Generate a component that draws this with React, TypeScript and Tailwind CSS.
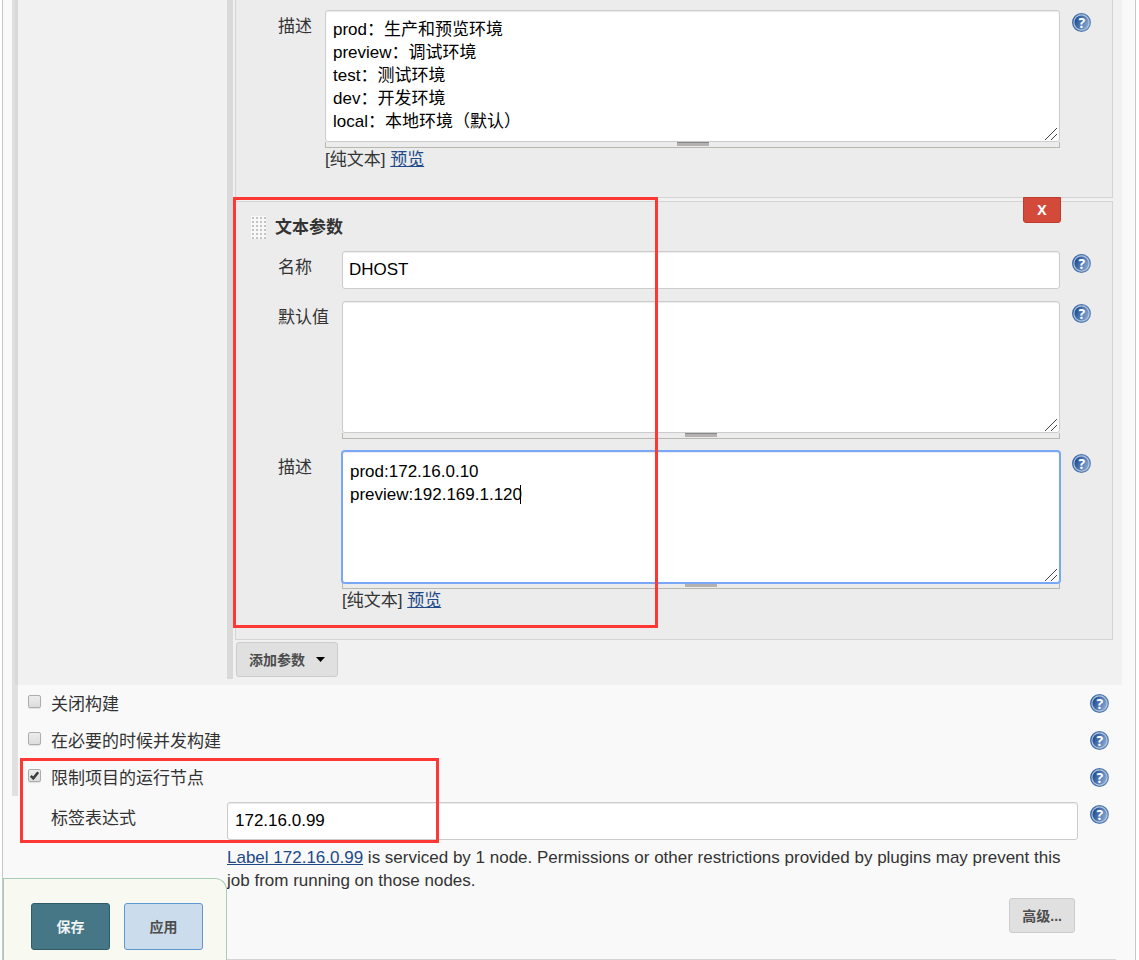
import { useState, type ReactNode } from "react";

function HelpButton({ topic }: { topic: string }) {
  return (
    <button type="button" aria-label={topic} className="block size-[19px] shrink-0">
      <svg viewBox="0 0 19 19" className="size-full" aria-hidden="true">
        <defs>
          <linearGradient id="helpRim" x1="0" y1="0.3" x2="1" y2="0.6">
            <stop offset="0" stopColor="#3465a4" />
            <stop offset="1" stopColor="#5f86b8" />
          </linearGradient>
          <linearGradient id="helpDisk" x1="0" y1="0.3" x2="1" y2="0.7">
            <stop offset="0" stopColor="#1d4a8f" />
            <stop offset="1" stopColor="#86a8d2" />
          </linearGradient>
        </defs>
        <circle cx="9.5" cy="9.5" r="8.8" fill="#b4c5de" stroke="url(#helpRim)" strokeWidth="1.3" />
        <circle cx="9.5" cy="9.5" r="7" fill="url(#helpDisk)" />
        <text
          x="9.8"
          y="14.6"
          textAnchor="middle"
          fontSize="14"
          fontWeight="700"
          fontFamily="'Open Sans', sans-serif"
          fill="#ffffff"
        >
          ?
        </text>
      </svg>
    </button>
  );
}

const fieldClass =
  "block w-full rounded-[3px] border bg-white text-black shadow-[inset_0_1px_1px_rgba(0,0,0,0.08)] outline-none";

type AreaProps = { id: string; value: string; active?: boolean; children?: ReactNode };

function ResizableArea({ id, value, active, children }: AreaProps) {
  const [text, setText] = useState(value);
  return (
    <div className="relative">
      <textarea
        id={id}
        spellCheck={false}
        value={text}
        onChange={(e) => setText(e.target.value)}
        className={`${fieldClass} h-[132px] resize-y px-[7px] pb-[7px] leading-[23px] [&::-webkit-resizer]:bg-transparent ${
          active ? "relative z-10 border-[#7aa7f5] pt-2 ring-1 ring-[#7aa7f5]" : "border-[#ccc] pt-[7px]"
        }`}
      />
      <div className="flex h-[6px] justify-center border-x border-b border-[#b8b8b0]">
        <span className="h-[4px] w-8 border-t border-[#888] bg-[#b5b1b1]" />
      </div>
      <svg
        viewBox="0 0 12 12"
        className="pointer-events-none absolute right-[3px] bottom-2 z-20 size-3"
        aria-hidden="true"
      >
        <path d="M0 12 12 0M6 12 12 6" fill="none" stroke="#444" strokeWidth="1" />
      </svg>
      {children}
    </div>
  );
}

function PreviewLine() {
  return (
    <div className="leading-[23px]">
      [纯文本]{" "}
      <a href="#preview" className="text-[#204a87] underline">
        预览
      </a>
    </div>
  );
}

type RowProps = {
  label: string;
  htmlFor: string;
  narrow?: boolean;
  children: ReactNode;
};

function FieldRow({ label, htmlFor, narrow, children }: RowProps) {
  return (
    <div className="flex items-start">
      <label htmlFor={htmlFor} className={`shrink-0 pt-[5px] leading-[23px] ${narrow ? "w-[47px]" : "w-16"}`}>
        {label}
      </label>
      <div className="min-w-0 flex-1">{children}</div>
      <div className="ml-3 pt-[3px]">
        <HelpButton topic={`帮助：${label}`} />
      </div>
    </div>
  );
}

function CheckRow({ id, label, checked = false }: { id: string; label: string; checked?: boolean }) {
  const [on, setOn] = useState(checked);
  return (
    <div className="flex h-[37px] items-center pr-[13px] pl-[10px]">
      <span className="mr-[10px] mb-1 grid size-[13px] shrink-0">
        <input
          id={id}
          type="checkbox"
          checked={on}
          onChange={(e) => setOn(e.target.checked)}
          className="peer col-start-1 row-start-1 size-[13px] appearance-none rounded-[2px] border border-[#adadad] bg-linear-to-b from-[#ededed] to-[#dcdcdc] shadow-[0_1px_1px_rgba(0,0,0,0.1)]"
        />
        <svg
          viewBox="0 0 13 13"
          className="pointer-events-none invisible col-start-1 row-start-1 size-[13px] peer-checked:visible"
          aria-hidden="true"
        >
          <path d="M2.8 6.8 5.3 9.3 10.2 3.2" fill="none" stroke="#3c3c3c" strokeWidth="2.5" />
        </svg>
      </span>
      <label htmlFor={id} className="flex-1 pt-[2px] leading-[23px]">
        {label}
      </label>
      <HelpButton topic={`帮助：${label}`} />
    </div>
  );
}

function DragHandle() {
  return (
    <svg width="15" height="23" viewBox="0 0 15 23" aria-hidden="true">
      <defs>
        <pattern id="grip" width="4" height="4" patternUnits="userSpaceOnUse">
          <rect width="4" height="4" fill="#f8f8f8" />
          <rect x="1" y="1" width="2" height="2" fill="#c4c4c4" />
        </pattern>
      </defs>
      <rect width="15" height="23" fill="url(#grip)" />
    </svg>
  );
}

const plainButton =
  "flex h-[35px] items-center rounded-[3px] border border-[#ccc] bg-[#e0e0e0] px-3 text-sm font-bold text-[#4d4d4d]";

export default function App() {
  const [host, setHost] = useState("DHOST");
  const [node, setNode] = useState("172.16.0.99");

  return (
    <div className="min-h-screen bg-white pr-[3px] pl-[2px] font-['Liberation_Sans','Noto_Sans_CJK_SC',sans-serif] text-[17px] font-normal text-[#333]">
      <main className="min-h-screen border-x border-[#c8c8c8] bg-[#f9f9f9] pr-[13px] pl-[9px]">
        <div className="border-l-[6px] border-[#e0e0e0]">
          <section className="-ml-[3px] bg-black/[0.03] pb-[6px] pl-[212px]">
            <div className="border-l-[6px] border-[#d9d9d9] pr-[9px] pb-[2px] pl-[2px]">
              <div className="border-x border-b border-[#d4d4d4] bg-[#ececec] pt-[10px] pr-[21px] pb-[26px] pl-[42px]">
                <FieldRow label="描述" htmlFor="env-description" narrow>
                  <ResizableArea
                    id="env-description"
                    value={"prod：生产和预览环境\npreview：调试环境\ntest：测试环境\ndev：开发环境\nlocal：本地环境（默认）"}
                  />
                  <PreviewLine />
                </FieldRow>
              </div>

              <div className="relative mt-[3px] border border-[#d4d4d4] bg-[#ececec] pt-[14px] pr-[21px] pb-[27px] pl-[42px]">
                <button
                  type="button"
                  aria-label="删除"
                  className="absolute -top-[5px] right-[51px] flex h-[26px] w-[38px] items-center justify-center rounded-b-[3px] border border-[#c23a2b] bg-[#d34a3a] font-['Open_Sans',sans-serif] text-sm font-bold text-white"
                >
                  X
                </button>
                <div className="-ml-[27px] flex items-center gap-[9px]">
                  <DragHandle />
                  <h2 className="leading-[23px] font-bold">文本参数</h2>
                </div>
                <div className="mt-3 flex flex-col gap-3">
                  <FieldRow label="名称" htmlFor="param-name">
                    <input
                      id="param-name"
                      value={host}
                      onChange={(e) => setHost(e.target.value)}
                      className={`${fieldClass} h-[38px] border-[#ccc] px-[6px]`}
                    />
                  </FieldRow>
                  <FieldRow label="默认值" htmlFor="param-default">
                    <ResizableArea id="param-default" value="" />
                  </FieldRow>
                  <FieldRow label="描述" htmlFor="param-description">
                    <ResizableArea
                      id="param-description"
                      value={"prod:172.16.0.10\npreview:192.169.1.120"}
                      active
                    >
                      <span className="absolute top-[34px] left-[178px] z-20 h-[19px] w-px bg-black" />
                    </ResizableArea>
                    <PreviewLine />
                  </FieldRow>
                </div>
                <div className="pointer-events-none absolute -top-[5px] -left-[3px] z-30 h-[431px] w-[425px] border-[3px] border-[#ff3836]" />
              </div>

              <button type="button" className={`${plainButton} mt-[2px] ml-px gap-[11px]`}>
                添加参数
                <svg width="9" height="5" viewBox="0 0 9 5" aria-hidden="true">
                  <path d="M0 0h9L4.500 5z" fill="#000" />
                </svg>
              </button>
            </div>
          </section>

          <CheckRow id="disable-build" label="关闭构建" />
          <CheckRow id="concurrent-build" label="在必要的时候并发构建" />
          <div className="relative">
            <CheckRow id="restrict-node" label="限制项目的运行节点" checked />
            <div className="pointer-events-none absolute -top-px left-[2px] h-[85px] w-[419px] border-[3px] border-[#ff3836]" />
          </div>
        </div>

        <section className="mr-[6px] border-b border-[#d4d4d4] pt-[6px] pb-[26px] pl-[39px]">
          <div className="flex items-start pr-[7px]">
            <label htmlFor="label-expression" className="w-44 shrink-0 pt-[5px] leading-[23px]">
              标签表达式
            </label>
            <input
              id="label-expression"
              value={node}
              onChange={(e) => setNode(e.target.value)}
              className={`${fieldClass} h-[38px] min-w-0 flex-1 border-[#ccc] px-[7px]`}
            />
            <div className="ml-3 pt-[3px]">
              <HelpButton topic="帮助：标签表达式" />
            </div>
          </div>
          <p className="mt-[6px] mr-[38px] ml-44 leading-[23px]">
            <a href="#label" className="text-[#204a87] underline">
              Label 172.16.0.99
            </a>{" "}
            is serviced by 1 node. Permissions or other restrictions provided by plugins may prevent this job from
            running on those nodes.
          </p>
          <div className="mt-[6px] mr-[41px] flex justify-end">
            <button type="button" className={plainButton}>
              高级...
            </button>
          </div>
        </section>
      </main>

      <footer className="fixed bottom-0 left-[3px] flex gap-[14px] rounded-tr-xl border-t border-r border-l border-[#a9ccb5] bg-[#f8f9f0] pt-6 pr-[23px] pb-[10px] pl-[27px] text-sm font-bold">
        <button type="submit" className="h-[47px] w-[79px] rounded-[3px] border border-[#305c69] bg-[#457786] text-[#f0f4f5]">
          保存
        </button>
        <button type="button" className="h-[47px] w-[79px] rounded-[3px] border border-[#5d97d1] bg-[#cbdcec] text-[#4d4d4d]">
          应用
        </button>
      </footer>
    </div>
  );
}
